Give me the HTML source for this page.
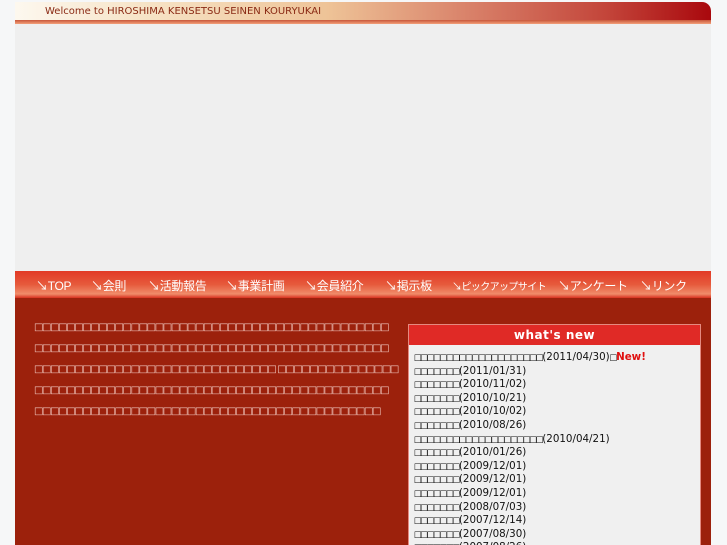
<!DOCTYPE html><html><head><meta charset="utf-8"><style>
*{margin:0;padding:0}
html,body{width:727px;height:545px;overflow:hidden}
body{background:#f6f7f8;position:relative;font-family:"Liberation Sans","DejaVu Sans","Noto Sans CJK JP",sans-serif}
.hdr{position:absolute;left:15px;top:2px;width:696px;height:19px;border-top-right-radius:9px;background:linear-gradient(90deg,#fdf8ef 0%,#f6e2c4 20%,#eec397 45%,#d9826a 65%,#c3453a 85%,#a9080d 100%)}
.hdr span{position:absolute;left:30px;top:4px;font:10px "DejaVu Sans",sans-serif;color:#8a2a14}
.ln{position:absolute;left:15px;top:20px;width:696px;height:4px;background:linear-gradient(#c8573a,#f3a07a)}
.gray{position:absolute;left:15px;top:24px;width:696px;height:247px;background:#efefef}
.nav{position:absolute;left:15px;top:271px;width:696px;height:27px;background:linear-gradient(#e23a26 0%,#e65a3c 50%,#f08c6a 85%,#d8301f 100%)}
.nav span{position:absolute;top:6px;color:#fff;font:12px "Liberation Sans","Noto Sans CJK JP",sans-serif;white-space:nowrap;letter-spacing:-.3px}
.main{position:absolute;left:15px;top:298px;width:696px;height:247px;background:#9c210c}
.txt{position:absolute;left:34px;top:317px;width:370px;color:#f1c8bf;font:10px "DejaVu Sans",sans-serif;letter-spacing:-1.4px;line-height:21px;white-space:nowrap}
.box{position:absolute;left:408px;top:324px;width:291px;height:221px;overflow:hidden;background:#f0f0f0;border:1px solid #e48a80;border-bottom:none}
.box h3{background:#e02a26;color:#fff;font:bold 12px "DejaVu Sans",sans-serif;text-align:center;height:20px;line-height:20px;letter-spacing:.5px}
.list{padding:6px 0 0 5px;font:10.3px/13.6px "DejaVu Sans",sans-serif;color:#111;white-space:nowrap}
.b{font-size:8.4px;line-height:10px;letter-spacing:-1.5px}
.new{color:#e01010;font-weight:bold}
</style></head><body>
<div class="hdr"><span>Welcome to HIROSHIMA KENSETSU SEINEN KOURYUKAI</span></div>
<div class="ln"></div>
<div class="gray"></div>
<div class="nav">
<span style="left:21px">↘TOP</span><span style="left:76px">↘会則</span><span style="left:133px">↘活動報告</span><span style="left:211px">↘事業計画</span><span style="left:290px">↘会員紹介</span><span style="left:370px">↘掲示板</span><span style="left:437px;font-size:10px;top:7px;letter-spacing:-.6px">↘ピックアップサイト</span><span style="left:543px">↘アンケート</span><span style="left:625px">↘リンク</span>
</div>
<div class="main"></div>
<div class="txt">□□□□□□□□□□□□□□□□□□□□□□□□□□□□□□□□□□□□□□□□□□□□<br>□□□□□□□□□□□□□□□□□□□□□□□□□□□□□□□□□□□□□□□□□□□□<br>□□□□□□□□□□□□□□□□□□□□□□□□□□□□□□ □□□□□□□□□□□□□□□<br>□□□□□□□□□□□□□□□□□□□□□□□□□□□□□□□□□□□□□□□□□□□□<br>□□□□□□□□□□□□□□□□□□□□□□□□□□□□□□□□□□□□□□□□□□□</div>
<div class="box"><h3>what's new</h3><div class="list">
<span class="b">□□□□□□□□□□□□□□□□□□□□</span>(2011/04/30)<span class="b">□</span><span class="new">New!</span><br>
<span class="b">□□□□□□□</span>(2011/01/31)<br>
<span class="b">□□□□□□□</span>(2010/11/02)<br>
<span class="b">□□□□□□□</span>(2010/10/21)<br>
<span class="b">□□□□□□□</span>(2010/10/02)<br>
<span class="b">□□□□□□□</span>(2010/08/26)<br>
<span class="b">□□□□□□□□□□□□□□□□□□□□</span>(2010/04/21)<br>
<span class="b">□□□□□□□</span>(2010/01/26)<br>
<span class="b">□□□□□□□</span>(2009/12/01)<br>
<span class="b">□□□□□□□</span>(2009/12/01)<br>
<span class="b">□□□□□□□</span>(2009/12/01)<br>
<span class="b">□□□□□□□</span>(2008/07/03)<br>
<span class="b">□□□□□□□</span>(2007/12/14)<br>
<span class="b">□□□□□□□</span>(2007/08/30)<br>
<span class="b">□□□□□□□</span>(2007/08/26)
</div></div>
</body></html>
